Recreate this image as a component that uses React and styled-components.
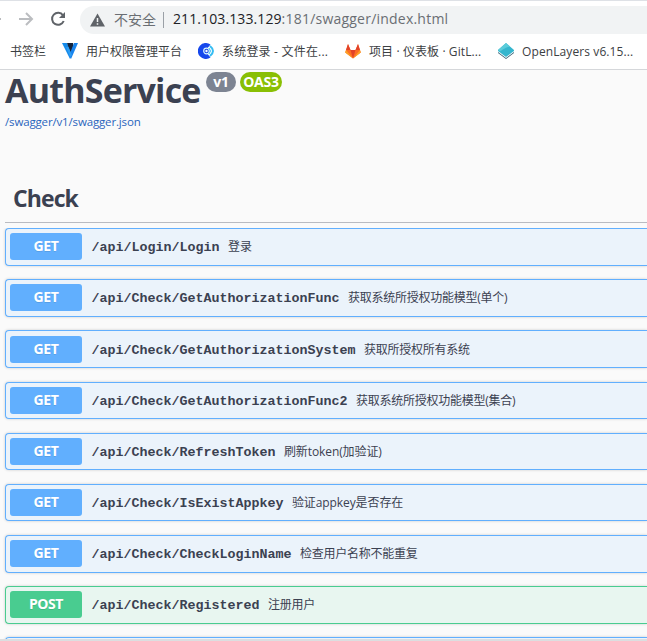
import React from "react";
import styled, { createGlobalStyle } from "styled-components";

const Global = createGlobalStyle`
  * { box-sizing: border-box; }
  html, body { margin: 0; background: #fafafa; overflow: hidden; }
`;
const Page = styled.div`
  width: 647px;
  height: 641px;
  overflow: hidden;
  display: flex;
  flex-direction: column;
  background: #fafafa;
  color: #3b4151;
  font-family: "Open Sans", "Noto Sans CJK SC", sans-serif;
  white-space: nowrap;
`;
const Toolbar = styled.div`
  flex: none;
  height: 37px;
  display: flex;
  align-items: center;
  background: #fff;
  border-top: 1px solid #dee1e6;
`;
const NavIcons = styled.svg`
  flex: none;
  width: 80px;
  height: 36px;
`;
const AddressBar = styled.div`
  flex: 1;
  height: 28px;
  margin-top: 2px;
  padding-left: 10px;
  display: flex;
  align-items: center;
  background: #f1f3f4;
  border-radius: 14px 0 0 14px;
  font-size: 14px;
  line-height: 26px;
  color: #6a6e73;
`;
const Security = styled.span`
  margin-left: 9px;
  padding-bottom: 2px;
  font-family: "Noto Sans CJK SC", sans-serif;
`;
const Divider = styled.span`
  width: 1px;
  height: 16px;
  margin: 0 9px 0 7px;
  background: #9aa0a6;
`;
const Url = styled.span`
  padding-bottom: 2px;
  letter-spacing: ${(p) => p.$spacing}px;
  color: ${(p) => (p.$strong ? "#202124" : "#6a6e73")};
`;
const Bookmarks = styled.div`
  flex: none;
  height: 33px;
  padding: 0 0 4px 10px;
  display: flex;
  align-items: center;
  background: #fff;
  border-bottom: 1px solid #d5d7da;
  font-size: 12px;
  color: #3c4043;
`;
const Bookmark = styled.div`
  flex: none;
  width: ${(p) => p.$width}px;
  display: flex;
  align-items: center;
  gap: 8px;
  letter-spacing: ${(p) => p.$spacing || 0}px;
  svg { flex: none; width: 16px; height: 16px; }
`;
const Info = styled.header`
  flex: none;
  height: 102px;
  padding-left: 5px;
`;
const TitleRow = styled.div`
  display: flex;
  align-items: flex-start;
  height: 43px;
`;
const Title = styled.h1`
  width: 201px;
  margin: -5px 0 0;
  font-size: 34px;
  line-height: 50px;
  font-weight: 700;
  letter-spacing: -0.8px;
`;
const Version = styled.span`
  width: ${(p) => p.$width}px;
  height: 20px;
  margin: 2px 4px 0 0;
  border-radius: 10px;
  background: ${(p) => p.$color};
  color: #fff;
  font-size: 14px;
  font-weight: 700;
  line-height: 20px;
  text-align: center;
  letter-spacing: -0.2px;
`;
const SpecLink = styled.a`
  display: block;
  color: #2a65bd;
  font-size: 11.5px;
  line-height: 17px;
  letter-spacing: -0.15px;
`;
const Tag = styled.h2`
  flex: none;
  height: 51px;
  margin: 0 0 5px 5px;
  padding: 9px 0 0 8px;
  border-bottom: 1px solid #b9bbc1;
  font-size: 23px;
  line-height: 34px;
  font-weight: 700;
  letter-spacing: -0.9px;
`;
const Operations = styled.div`
  flex: none;
  height: 411px;
  display: flex;
  flex-direction: column;
  gap: 13.68px;
  padding-left: 5px;
  overflow: hidden;
`;
const Operation = styled.div`
  flex: none;
  height: 37.5px;
  padding-left: 4px;
  display: flex;
  align-items: center;
  border: 1px solid ${(p) => (p.$post ? "#49cc90" : "#61affe")};
  border-right: 0;
  border-radius: 4px 0 0 4px;
  background: ${(p) => (p.$post ? "#e8f6f0" : "#ebf3fb")};
  box-shadow: 0 0 3px rgba(0, 0, 0, 0.19);
`;
const Method = styled.span`
  width: 72px;
  height: 27px;
  border-radius: 3px;
  background: ${(p) => (p.$post ? "#49cc90" : "#61affe")};
  color: #fff;
  font-size: 14px;
  font-weight: 700;
  line-height: 26px;
  text-align: center;
  letter-spacing: -0.4px;
  text-shadow: 0 1px 0 rgba(0, 0, 0, 0.1);
`;
const Path = styled.span`
  margin-left: 9.5px;
  padding-top: 2px;
  font-family: "Liberation Mono", monospace;
  font-size: 13.33px;
  font-weight: 700;
`;
const Summary = styled.span`
  margin-left: 8.5px;
  padding-bottom: 1px;
  font-size: 12px;
  letter-spacing: ${(p) => p.$spacing || 0}px;
`;
const PageEdge = styled.div`
  flex: none;
  height: 2px;
  background: #dcdee0;
`;
const WarnIcon = styled.svg`
  flex: none;
  width: 15px;
  height: 14px;
`;

const operations = [
  ["/api/Login/Login", "登录"],
  ["/api/Check/GetAuthorizationFunc", "获取系统所授权功能模型(单个)", -0.25],
  ["/api/Check/GetAuthorizationSystem", "获取所授权所有系统", -0.25],
  ["/api/Check/GetAuthorizationFunc2", "获取系统所授权功能模型(集合)", -0.25],
  ["/api/Check/RefreshToken", "刷新token(加验证)", -0.1],
  ["/api/Check/IsExistAppkey", "验证appkey是否存在", -0.1],
  ["/api/Check/CheckLoginName", "检查用户名称不能重复", -0.25],
  ["/api/Check/Registered", "注册用户", -0.25, true],
  ["", ""],
];

export default function App() {
  return (
    <Page>
      <Global />
      <Toolbar>
        <NavIcons viewBox="0 0 80 36" fill="none">
          <path d="M0 18h1" stroke="#b9bbbe" strokeWidth="2" />
          <path d="M19 18h12.500M26 12l6 6-6 6" stroke="#bbbdc0" strokeWidth="2" />
          <path d="M63 14.300A6 6 0 1 0 63.700 20" stroke="#5f6368" strokeWidth="2" />
          <path d="M65 11v6h-6z" fill="#5f6368" />
        </NavIcons>
        <AddressBar>
          <WarnIcon viewBox="0 0 15 14">
            <path d="M7.500 0.500 15 13.500H0z" fill="#5f6368" />
            <path d="M7.500 5v4M7.500 10.200v1.600" stroke="#f1f3f4" strokeWidth="1.500" />
          </WarnIcon>
          <Security>不安全</Security>
          <Divider />
          <Url $strong $spacing={0.1}>211.103.133.129</Url>
          <Url $spacing={0.22}>:181/swagger/index.html</Url>
        </AddressBar>
      </Toolbar>
      <Bookmarks>
        <Bookmark $width={52}>书签栏</Bookmark>
        <Bookmark $width={136}>
          <svg viewBox="0 0 16 16">
            <path d="M0 0h5l5 10-2 6z" fill="#168bea" />
            <path d="M5 0h6l1 6-3 5z" fill="#14243c" />
            <path d="M12 0h4L9 16l-2-3z" fill="#1683ee" />
            <path d="M4 4h2.500L10 12l-2 2z" fill="#2c9cf3" />
          </svg>
          用户权限管理平台
        </Bookmark>
        <Bookmark $width={147} $spacing={0.2}>
          <svg viewBox="0 0 16 16" fill="none">
            <path d="M12.500 1.500A8 8 0 1 0 12.500 14.500L10 11.500V4.500z" fill="#1648ec" />
            <path d="M12 3q6 5 0 10" stroke="#36bdf3" strokeWidth="2" />
            <circle cx="8.500" cy="8" r="2.800" fill="#1648ec" stroke="#d9f4ff" strokeWidth="1.200" />
            <circle cx="8.500" cy="8" r="1.200" fill="#fff" />
            <path d="M11 5q3 3 0 6" stroke="#36bdf3" />
          </svg>
          系统登录 - 文件在...
        </Bookmark>
        <Bookmark $width={153} $spacing={0.1}>
          <svg viewBox="0 0 16 16">
            <path d="M3 1 .2 9.500 8 15.500l7.800-6L13 1l-2.500 6h-5z" fill="#fc6d26" />
            <path d="M5.500 7h5L8 15.500z" fill="#e24329" />
            <path d="m3 1 2.500 6H1zM13 1l-2.500 6H15z" fill="#e24329" />
            <path d="M1 7 .2 9.500 8 15.500zM15 7l.8 2.500L8 15.500z" fill="#fca326" />
          </svg>
          项目 · 仪表板 · GitL...
        </Bookmark>
        <Bookmark $width={145} $spacing={0.1}>
          <svg viewBox="0 0 16 16">
            <path d="m0 9 8 6 8-6v1l-8 6-8-6z" fill="#376377" />
            <path d="m0 7 8-7 8 7v1l-8 6-8-6z" fill="#35b6ce" />
            <path d="m0 7 8-7 4 3.500Q8 4 2 8.500z" fill="#5bccda" />
          </svg>
          OpenLayers v6.15...
        </Bookmark>
      </Bookmarks>
      <Info>
        <TitleRow>
          <Title>AuthService</Title>
          <Version $width={30} $color="#7d8492">v1</Version>
          <Version $width={42} $color="#89bf04">OAS3</Version>
        </TitleRow>
        <SpecLink>/swagger/v1/swagger.json</SpecLink>
      </Info>
      <Tag>Check</Tag>
      <Operations>
        {operations.map(([path, text, spacing, post]) => (
          <Operation key={path} $post={post}>
            {path && (
              <>
                <Method $post={post}>{post ? "POST" : "GET"}</Method>
                <Path>{path}</Path>
                <Summary $spacing={spacing}>{text}</Summary>
              </>
            )}
          </Operation>
        ))}
      </Operations>
      <PageEdge />
    </Page>
  );
}
